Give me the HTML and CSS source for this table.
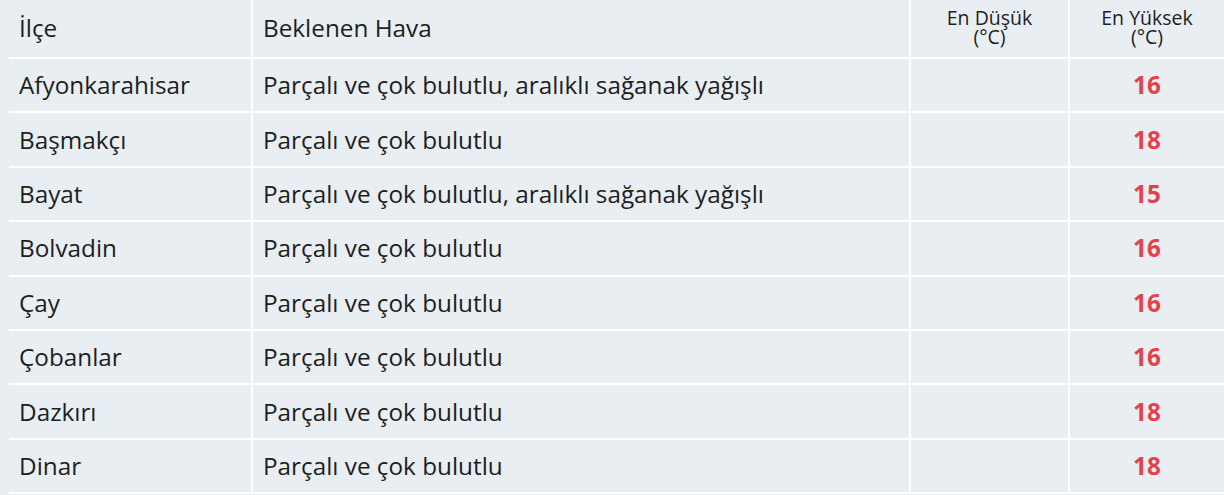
FILE: index.html
```html
<!DOCTYPE html>
<html lang="tr">
<head>
<meta charset="utf-8">
<link rel="stylesheet" href="styles.css">
</head>
<body>
<div class="wrap">
<table class="weather">
<colgroup><col class="c1"><col class="c2"><col class="c3"><col class="c4"></colgroup>
<thead>
<tr><th class="name">İlçe</th><th class="desc">Beklenen Hava</th><th class="temp">En Düşük<br>(°C)</th><th class="temp">En Yüksek<br>(°C)</th></tr>
</thead>
<tbody>
<tr><td>Afyonkarahisar</td><td>Parçalı ve çok bulutlu, aralıklı sağanak yağışlı</td><td class="lo"></td><td class="hi">16</td></tr>
<tr><td>Başmakçı</td><td>Parçalı ve çok bulutlu</td><td class="lo"></td><td class="hi">18</td></tr>
<tr><td>Bayat</td><td>Parçalı ve çok bulutlu, aralıklı sağanak yağışlı</td><td class="lo"></td><td class="hi">15</td></tr>
<tr><td>Bolvadin</td><td>Parçalı ve çok bulutlu</td><td class="lo"></td><td class="hi">16</td></tr>
<tr><td>Çay</td><td>Parçalı ve çok bulutlu</td><td class="lo"></td><td class="hi">16</td></tr>
<tr><td>Çobanlar</td><td>Parçalı ve çok bulutlu</td><td class="lo"></td><td class="hi">16</td></tr>
<tr><td>Dazkırı</td><td>Parçalı ve çok bulutlu</td><td class="lo"></td><td class="hi">18</td></tr>
<tr><td>Dinar</td><td>Parçalı ve çok bulutlu</td><td class="lo"></td><td class="hi">18</td></tr>
</tbody>
</table>
</div>
</body>
</html>
```
FILE: styles.css
```css
html, body {
  margin: 0;
  padding: 0;
  background: #e8eef2;
}
.wrap {
  padding-left: 9px;
}
.weather {
  width: 1215px;
  border-collapse: collapse;
  table-layout: fixed;
  font-family: "Open Sans", sans-serif;
  color: #1e1e1e;
}
.c1 { width: 243px; }
.c2 { width: 658px; }
.c3 { width: 159px; }
.c4 { width: 155px; }
.weather th, .weather td {
  border: 2px solid #ffffff;
  height: 52.4px;
  padding: 0 10px;
  font-size: 24.3px;
  line-height: 30px;
  font-weight: 400;
  text-align: left;
  vertical-align: middle;
}
.weather thead th {
  border-top: none;
  height: 54px;
  padding-bottom: 2px;
}
.weather tr > :first-child { border-left: none; }
.weather tr > :last-child { border-right: none; }
.weather th.temp {
  font-size: 19.5px;
  line-height: 19px;
  text-align: center;
  padding-bottom: 3px;
}
.weather td.hi {
  text-align: center;
  font-weight: 700;
  color: #e2434b;
}
```
